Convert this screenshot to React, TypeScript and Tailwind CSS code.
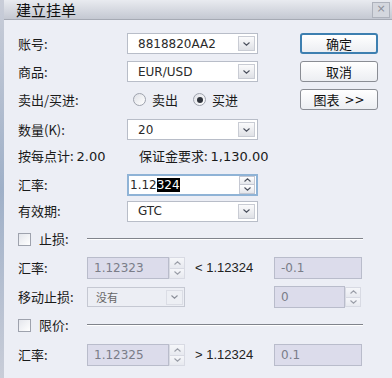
import React from "react";

const cjk = "font-['Noto_Sans_CJK_SC',sans-serif]";
const latin = "font-['DejaVu_Sans','Noto_Sans_CJK_SC',sans-serif]";

const Chevron = ({ up = false }: { up?: boolean }) => (
  <svg width="7" height="4" viewBox="0 0 7 4" className={up ? "rotate-180" : ""}>
    <path d="M0.5 0.5 L3.5 3.2 L6.5 0.5" fill="none" stroke="#4a4f5c" strokeWidth="1.1" />
  </svg>
);

const ArrowBox = ({ disabled = false }: { disabled?: boolean }) => (
  <div
    className={`w-[17px] h-[15px] flex items-center justify-center border ${
      disabled ? "border-[#d0d2dc] bg-[#eef0f4] opacity-60" : "border-[#c9ccd4] bg-gradient-to-b from-[#fbfbfc] to-[#dfe1e6]"
    }`}
  >
    <Chevron />
  </div>
);

const Select = ({ value, disabled = false, w = "w-[131px]" }: { value: string; disabled?: boolean; w?: string }) => (
  <div
    className={`${w} h-[21px] flex items-center justify-between border pl-[10px] pr-[2px] ${
      disabled ? "bg-[#eceef4] border-[#c5c8d2] text-[#555]" : "bg-white border-[#b8bdc8] text-[#2a2a2a]"
    }`}
  >
    <span className={`text-[12px] ${latin}`}>{value}</span>
    <ArrowBox disabled={disabled} />
  </div>
);

const Spin = ({ disabled = false, h = "h-[21px]" }: { disabled?: boolean; h?: string }) => (
  <div className={`w-[16px] ${h} flex flex-col ${disabled ? "opacity-50" : ""}`}>
    <div className="flex-1 flex items-center justify-center border border-[#c5c8d2] bg-gradient-to-b from-white to-[#e4e6eb]">
      <Chevron up />
    </div>
    <div className="flex-1 flex items-center justify-center border border-t-0 border-[#c5c8d2] bg-gradient-to-b from-white to-[#e4e6eb]">
      <Chevron />
    </div>
  </div>
);

const Button = ({ children, primary = false }: { children: React.ReactNode; primary?: boolean }) => (
  <div
    className={`w-[78px] h-[21px] flex items-center justify-center rounded-[3px] bg-gradient-to-b from-white to-[#eceef2] text-[13px] text-[#111] ${cjk} ${
      primary ? "border-2 border-[#3d7fb0]" : "border border-[#8a8d94]"
    }`}
  >
    {children}
  </div>
);

const Label = ({ children, w = "w-[109px]" }: { children: React.ReactNode; w?: string }) => (
  <div className={`${w} shrink-0 text-[13px] text-[#1a1a1a] ${cjk}`}>{children}</div>
);

const DisabledInput = ({ value, w }: { value: string; w: string }) => (
  <div
    className={`${w} h-[22px] flex items-center px-[6px] bg-[#dcdceb] border border-[#b9bccb] text-[12px] text-[#7a7d88] ${latin}`}
  >
    {value}
  </div>
);

const Check = () => (
  <div className="w-[13px] h-[13px] border border-[#9ea2ad] bg-gradient-to-br from-[#e4e6ec] to-white" />
);

const Radio = ({ on = false }: { on?: boolean }) => (
  <div className="w-[13px] h-[13px] rounded-full border border-[#9ea2ad] bg-gradient-to-br from-[#dfe1e7] to-white flex items-center justify-center">
    {on && <div className="w-[6px] h-[6px] rounded-full bg-[#2f333b]" />}
  </div>
);

export default function App() {
  return (
    <div className="w-[392px] h-[378px] flex bg-[#eceef5] overflow-hidden">
      <div className="w-[4px] shrink-0 bg-gradient-to-b from-[#c9cdd8] via-[#9fb0c8] to-[#c9cdd8]" />
      <div className="flex-1 flex flex-col">
        <div className="h-[20px] flex items-center justify-between bg-gradient-to-b from-[#e9ebf0] to-[#c4c8d2] border-b border-[#a6aab4] pl-[12px] pr-[2px]">
          <span className={`text-[15px] leading-[18px] text-[#111] ${cjk}`}>建立挂单</span>
          <div className="w-[18px] h-[16px] flex items-center justify-center border border-[#aeb2bc] bg-[#d4d7de] text-[11px] text-[#8a8e98] font-['DejaVu_Sans',sans-serif]">
            ×
          </div>
        </div>

        <div className="flex flex-col pl-[14px]">
          <div className="mt-[13px] h-[21px] flex items-center">
            <Label>账号:</Label>
            <Select value="8818820AA2" />
            <div className="ml-[42px]"><Button primary>确定</Button></div>
          </div>
          <div className="mt-[7px] h-[21px] flex items-center">
            <Label>商品:</Label>
            <Select value="EUR/USD" />
            <div className="ml-[42px]"><Button>取消</Button></div>
          </div>
          <div className="mt-[7px] h-[21px] flex items-center">
            <Label>卖出/买进:</Label>
            <div className={`w-[131px] flex items-center text-[13px] text-[#1a1a1a] ${cjk}`}>
              <div className="ml-[6px]"><Radio /></div>
              <span className="ml-[6px]">卖出</span>
              <div className="ml-[15px]"><Radio on /></div>
              <span className="ml-[6px]">买进</span>
            </div>
            <div className="ml-[42px]">
              <Button>
                <span>图表</span>
                <span className={`ml-[5px] text-[12px] ${latin}`}>&gt;&gt;</span>
              </Button>
            </div>
          </div>
          <div className="mt-[9px] h-[21px] flex items-center">
            <Label>数量(K):</Label>
            <Select value="20" />
          </div>
          <div className={`mt-[6px] h-[20px] flex items-center text-[13px] text-[#1a1a1a] ${cjk}`}>
            <span className="w-[121px]">按每点计: <span className={latin}>2.00</span></span>
            <span>保证金要求: <span className={latin}>1,130.00</span></span>
          </div>
          <div className="mt-[8px] h-[21px] flex items-center">
            <Label>汇率:</Label>
            <div className="w-[131px] h-[22px] flex items-center justify-between bg-white border-2 border-[#8fb3d6] pr-[1px]">
              <span className={`pl-[1px] text-[12px] text-[#2a2a2a] ${latin}`}>
                1.12<span className="bg-black text-white">324</span>
              </span>
              <Spin h="h-[18px]" />
            </div>
          </div>
          <div className="mt-[6px] h-[20px] flex items-center">
            <Label>有效期:</Label>
            <Select value="GTC" />
          </div>

          <div className="mt-[8px] h-[20px] flex items-center">
            <Check />
            <span className={`ml-[8px] w-[48px] text-[13px] text-[#1a1a1a] ${cjk}`}>止损:</span>
            <div className="w-[276px] border-t border-[#80838b] border-b border-b-white" />
          </div>
          <div className="mt-[8px] h-[22px] flex items-center">
            <Label w="w-[69px]">汇率:</Label>
            <DisabledInput value="1.12323" w="w-[82px]" />
            <Spin disabled h="h-[22px]" />
            <span className="ml-[10px] w-[79px] text-[13px] text-[#222] font-['Liberation_Sans',sans-serif]">&lt; 1.12324</span>
            <DisabledInput value="-0.1" w="w-[88px]" />
          </div>
          <div className="mt-[8px] h-[20px] flex items-center">
            <Label w="w-[69px]">移动止损:</Label>
            <div className="w-[98px] h-[20px] flex items-center justify-between pl-[8px] pr-[1px] bg-[#eceef4] border border-[#c5c8d2]">
              <span className={`text-[11px] text-[#666] ${cjk}`}>没有</span>
              <ArrowBox disabled />
            </div>
            <div className="ml-[89px] flex items-center">
              <DisabledInput value="0" w="w-[71px]" />
              <Spin disabled h="h-[20px]" />
            </div>
          </div>
          <div className="mt-[8px] h-[20px] flex items-center">
            <Check />
            <span className={`ml-[8px] w-[48px] text-[13px] text-[#1a1a1a] ${cjk}`}>限价:</span>
            <div className="w-[276px] border-t border-[#80838b] border-b border-b-white" />
          </div>
          <div className="mt-[9px] h-[22px] flex items-center">
            <Label w="w-[69px]">汇率:</Label>
            <DisabledInput value="1.12325" w="w-[82px]" />
            <Spin disabled h="h-[22px]" />
            <span className="ml-[10px] w-[79px] text-[13px] text-[#222] font-['Liberation_Sans',sans-serif]">&gt; 1.12324</span>
            <DisabledInput value="0.1" w="w-[88px]" />
          </div>
        </div>
      </div>
    </div>
  );
}
